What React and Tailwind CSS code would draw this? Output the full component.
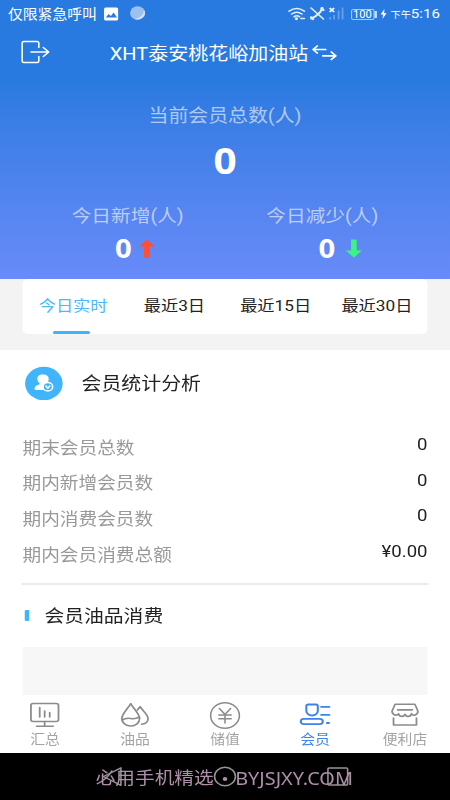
const stats = [
  { label: '期末会员总数', value: '0' },
  { label: '期内新增会员数', value: '0' },
  { label: '期内消费会员数', value: '0' },
  { label: '期内会员消费总额', value: '¥0.00' },
];

const tabs = ['今日实时', '最近3日', '最近15日', '最近30日'];

const navItems = [
  { label: '汇总', icon: SummaryIcon },
  { label: '油品', icon: OilIcon },
  { label: '储值', icon: YenIcon },
  { label: '会员', icon: MemberIcon, active: true },
  { label: '便利店', icon: StoreIcon },
];

function SummaryIcon() {
  return (
    <svg width="28" height="27" viewBox="0 0 28 27" fill="none" stroke="currentColor" strokeWidth="1.6" strokeLinecap="round">
      <rect x="1.5" y="1.500" width="24.5" height="18" rx="2" />
      <path d="M9.3 5.500v9.500M13.7 9v6M18.2 10.500v4.500M13.7 19.500v4.500M6.5 24.200h14.8" />
    </svg>
  );
}

function OilIcon() {
  return (
    <svg width="28" height="27" viewBox="0 0 28 27" fill="none" stroke="currentColor" strokeWidth="1.6" strokeLinecap="round" strokeLinejoin="round">
      <path d="M10.200 1.700C8.200 5.900 2.300 11.800 2.300 16.600a7.900 7.400 0 0 0 15.800 0C18.100 11.800 12.200 5.900 10.200 1.700z" />
      <path d="M2.500 18c3-2.200 5.300-1.900 7.700-1.500s4.700.5 7.600-1.500" />
      <path d="M16.200 8c1-1.200 1.800-2.200 2.400-3.300 1.600 3.400 7 7.600 7 12 0 3.300-2.500 5.300-5.700 5.500" />
    </svg>
  );
}

function YenIcon() {
  return (
    <svg width="28" height="27" viewBox="0 0 28 27" fill="none" stroke="currentColor" strokeWidth="1.4" strokeLinecap="round">
      <circle cx="14" cy="13.500" r="12.800" />
      <path d="M9 6.500l5 6 5-6M8.500 13h11M8.500 16.800h11M14 12.500v8.500" />
    </svg>
  );
}

function MemberIcon() {
  return (
    <svg width="28" height="27" viewBox="0 0 28 27" fill="none" stroke="currentColor" strokeWidth="1.800" strokeLinecap="round">
      <path d="M8 2.500h6.900q1.600 0 1.600 1.600v4.700a5.100 4.700 0 0 1-10.200 0V4.100q0-1.600 1.700-1.600z" />
      <rect x="1.300" y="16.900" width="19.600" height="5.200" rx="2.600" />
      <path d="M19.500 4.900h7.300M19.500 12.900h7.300M24.600 21h1.800" />
    </svg>
  );
}

function StoreIcon() {
  return (
    <svg width="28" height="27" viewBox="0 0 28 27" fill="none" stroke="currentColor" strokeWidth="1.600" strokeLinecap="round" strokeLinejoin="round">
      <path d="M5.200 2.200h17.600q1.200 2.800 2.700 7c0 4-4.700 5-5.700 2.500-1 3.500-4.800 3.500-5.800.5-1 3-4.800 3-5.800-.5-1 2.500-5.700 1.500-5.700-2.500q1.500-4.200 2.700-7z" />
      <path d="M7.500 7.900h13M3.800 16v7h20.400v-7" />
    </svg>
  );
}

function StatusBar() {
  return (
    <div className="flex h-7 items-center justify-between pl-[7px] pr-[9px]">
      <div className="flex items-center">
        <span className="pt-[2px] text-[13.200px]">仅限紧急呼叫</span>
        <svg className="ml-[6px]" width="14" height="14" viewBox="0 0 14 14">
          <rect x="0.500" y="0.500" width="12.500" height="13" rx="1.500" fill="#fff" />
          <path d="M2 10.500l2.600-3.500 2 2 2.400-3.400 3 4.900z" fill="#287ae0" />
        </svg>
        <svg className="ml-[8.500px]" width="15" height="15" viewBox="0 0 15 15">
          <circle cx="7.300" cy="7" r="6.700" fill="#9dc0ef" />
          <path d="M13.200 4a6.700 6.700 0 0 1-8.500 9C9.500 12 12.500 9 13.200 4z" fill="#d3e3f9" />
        </svg>
      </div>
      <div className="flex items-center">
        <svg width="16" height="14" viewBox="0 0 16 14" fill="none" stroke="#e5effc" strokeWidth="1.500" strokeLinecap="round">
          <path d="M1 4.200q6.700-5.200 13.500 0M3.200 7q4.600-3.500 9.200 0M5.500 9.700q2.400-1.800 4.700 0" />
          <circle cx="7.500" cy="11.700" r=".7" fill="#fff" />
          <path d="M11.500 11.500h3" />
        </svg>
        <svg className="ml-[3px]" width="14" height="14" viewBox="0 0 14 14" fill="none" stroke="#e5effc" strokeLinecap="round">
          <path d="M1.500 1l11 11" strokeWidth="1.400" />
          <path d="M11.500 1Q9.500 7.500 1.800 11.500" strokeWidth="2" />
          <path d="M10.800 1.200l1.600 1.800M1.500 10.300l1.700 1.700" strokeWidth="2.200" />
        </svg>
        <svg className="ml-[3px]" width="14" height="14" viewBox="0 0 14 14">
          <path d="M1 1l4 4M5 1l-4 4" stroke="#fff" strokeWidth="1.700" />
          <path d="M1.500 10v2.500M5 8v4.500M9 3.500v9M12.500 .5v12" stroke="#65a0ea" strokeWidth="1.600" />
        </svg>
        <span className="ml-[5.500px] flex h-[11px] w-[21px] items-center justify-center rounded-[2px] border border-[#a8c9f5] pt-px text-[10px] leading-none">100</span>
        <span className="h-[7px] w-[2px] bg-[#d0e2fa]" />
        <svg className="ml-[3px]" width="6" height="10" viewBox="0 0 6 10">
          <path d="M3.700 0L.3 5.500h2.200L2 10l3.600-5.800H3.500z" fill="#fff" />
        </svg>
        <span className="ml-[3.500px] pt-[3px] text-[9px]">下午</span>
        <span className="text-[13.400px] leading-none">5:16</span>
      </div>
    </div>
  );
}

function ArrowMark({ className }) {
  return (
    <svg className={className} width="15" height="19" viewBox="0 0 15 19" fill="currentColor">
      <path d="M5 .5h5v11h4.700L7.500 18.500.3 11.500H5z" />
    </svg>
  );
}

function Header() {
  return (
    <header className="h-[279px] bg-linear-to-b from-[#287ae0] from-28% to-[#688bf9] text-white">
      <StatusBar />
      <div className="flex h-[48px] items-center pl-[18px]">
        <svg width="28" height="24" viewBox="0 0 28 24" fill="none" stroke="currentColor" strokeWidth="1.400" strokeLinecap="round" strokeLinejoin="round">
          <path d="M16.500 7.500V3q0-1.500-1.500-1.500H3.200Q1.700 1.500 1.700 3v18q0 1.500 1.500 1.500H15q1.500 0 1.500-1.500v-4.500" />
          <path d="M9.500 12h15.500M20.500 7.500L25.300 12l-4.800 4.500" />
        </svg>
        <h1 className="ml-[51.500px] whitespace-nowrap pt-[4px] text-[17.800px]">XHT泰安桃花峪加油站</h1>
        <svg className="ml-[3px] mt-[1px]" width="23" height="18" viewBox="0 0 23 18" fill="none" stroke="currentColor" strokeWidth="1.700" strokeLinecap="round" strokeLinejoin="round">
          <path d="M5 2L1.300 5.500 5 9M1.500 5.500h11M17.500 8l4 3.800-4 3.700M10 11.800h11.300" />
        </svg>
      </div>
      <div className="flex flex-col items-center pt-[27px]">
        <p className="text-[17.700px] leading-[26px] text-white/60">当前会员总数(人)</p>
        <p className="mt-[12px] font-['Noto_Sans'] text-[36px] font-bold leading-[40px]">0</p>
      </div>
      <div className="mt-[22px] flex px-[27px]">
        <div className="flex flex-1 flex-col items-center">
          <p className="text-[17.500px] leading-[26px] text-white/60">今日新增(人)</p>
          <p className="mt-[5px] flex items-center gap-[5.500px] pl-[13px] font-['Noto_Sans'] text-[26px] font-bold leading-[28px]">
            0
            <ArrowMark className="rotate-180 text-[#ff4f32]" />
          </p>
        </div>
        <div className="flex flex-1 flex-col items-center">
          <p className="text-[17.500px] leading-[26px] text-white/60">今日减少(人)</p>
          <p className="mt-[5px] flex items-center gap-[9px] pl-[32px] font-['Noto_Sans'] text-[26px] font-bold leading-[28px]">
            0
            <ArrowMark className="text-[#3cf57f]" />
          </p>
        </div>
      </div>
    </header>
  );
}

function Tabs() {
  return (
    <div className="h-[71px] bg-[#f3f3f3] px-[20px]">
      <div className="flex h-[55px] rounded-[5px] bg-white">
        {tabs.map((tab, i) => (
          <button
            key={tab}
            className={
              i === 0
                ? 'flex flex-1 flex-col items-center text-[15.300px] text-[#4db8f8]'
                : 'flex flex-1 flex-col items-center text-[15.300px] text-[#222]'
            }
          >
            <span className="flex h-[52px] items-center whitespace-nowrap pt-[2px]">{tab}</span>
            {i === 0 && <span className="mr-[3px] h-[3px] w-[33px] rounded-sm bg-[#40b4fb]" />}
          </button>
        ))}
      </div>
    </div>
  );
}

function Stats() {
  return (
    <section className="px-[20px]">
      <div className="flex h-[66px] items-center pl-[2px]">
        <svg width="34" height="34" viewBox="0 0 34 34">
          <circle cx="17" cy="17.500" r="16.700" fill="#40b5fb" />
          <path d="M15.500 8.500c-2.800 0-4.300 1.900-4.300 4.300 0 2 .8 3.400 2 4.200.2 1-.4 1.600-1.400 2-2 .7-3 1.400-3 3.600 0 1.300.4 1.500 1.500 1.500h7.500c-1.500-3.500 0-6.500 2-7.500 1-.8 1.500-2 1.500-3.800 0-2.500-2-4.300-4.800-4.300z" fill="#fff" />
          <circle cx="20.500" cy="20.800" r="4.300" fill="#40b5fb" stroke="#fff" strokeWidth="1.500" />
          <path d="M18.500 19.500l2 2.800 2-2.800" fill="none" stroke="#fff" strokeWidth="1.300" />
        </svg>
        <h2 className="ml-[16.500px] pt-[3px] text-[17.700px] text-[#222]">会员统计分析</h2>
      </div>
      <div className="mt-[13px] flex flex-col">
        {stats.map((s) => (
          <div key={s.label} className="flex h-[35.600px] items-center justify-between text-[16.600px]">
            <span className="pt-[5px] text-[#999]">{s.label}</span>
            <span className="pb-[3px] text-[16.500px] text-[#222]">{s.value}</span>
          </div>
        ))}
      </div>
      <div className="-mx-[1px] mt-[11.600px] h-[2px] bg-[#ebebeb]" />
      <div className="flex h-[62px] items-center pl-[2px]">
        <span className="h-[11px] w-[3.500px] rounded-[1px] bg-[#40b5fb]" />
        <h2 className="ml-[14px] text-[17.600px] text-[#222]">会员油品消费</h2>
      </div>
      <div className="h-[49px] bg-[#f7f7f7]" />
    </section>
  );
}

function BottomNav() {
  return (
    <nav className="flex h-[58px] bg-white pt-[7px]">
      {navItems.map(({ label, icon: Icon, active }) => (
        <div
          key={label}
          className={
            active
              ? 'flex flex-1 flex-col items-center text-[#3d83ea]'
              : 'flex flex-1 flex-col items-center text-[#8c8c8c]'
          }
        >
          <Icon />
          <span
            className={
              active
                ? 'pt-[2px] text-[13.200px] leading-[18px]'
                : 'pt-[2px] text-[13.200px] leading-[18px] text-[#a3a3a3]'
            }
          >
            {label}
          </span>
        </div>
      ))}
    </nav>
  );
}

function SystemNav() {
  return (
    <div className="relative flex h-[47px] items-center justify-center bg-black">
      <svg width="230" height="24" viewBox="0 0 230 24" fill="none" stroke="#959595" strokeWidth="1.400">
        <path d="M22.500 2.800v17.500L7 11.500z" strokeLinejoin="round" />
        <circle cx="115" cy="11.500" r="9.300" />
        <rect x="206.500" y="3" width="17.500" height="17" rx="1" />
      </svg>
      <div className="absolute inset-0 flex items-center whitespace-nowrap pl-[85px] pt-[4px] text-[17.500px] text-[#ad8fa9]">
        <span>必用手机精选</span>
        <span className="ml-[8px] mr-[7px] h-[4px] w-[4px] rounded-full bg-[#ad8fa9]" />
        <span className="font-['Noto_Sans'] text-[17.700px]">BYJSJXY.COM</span>
      </div>
    </div>
  );
}

export default function App() {
  // the layout is 400 wide and stretched to the 450 of the screen
  return (
    <div className="h-[800px] w-[450px] overflow-hidden bg-white">
      <div className="flex h-[800px] w-[400px] origin-left scale-x-[1.125] flex-col font-[Roboto,'Noto_Sans_CJK_SC',sans-serif]">
        <Header />
        <Tabs />
        <main className="flex-1 overflow-hidden">
          <Stats />
        </main>
        <BottomNav />
        <SystemNav />
      </div>
    </div>
  );
}
